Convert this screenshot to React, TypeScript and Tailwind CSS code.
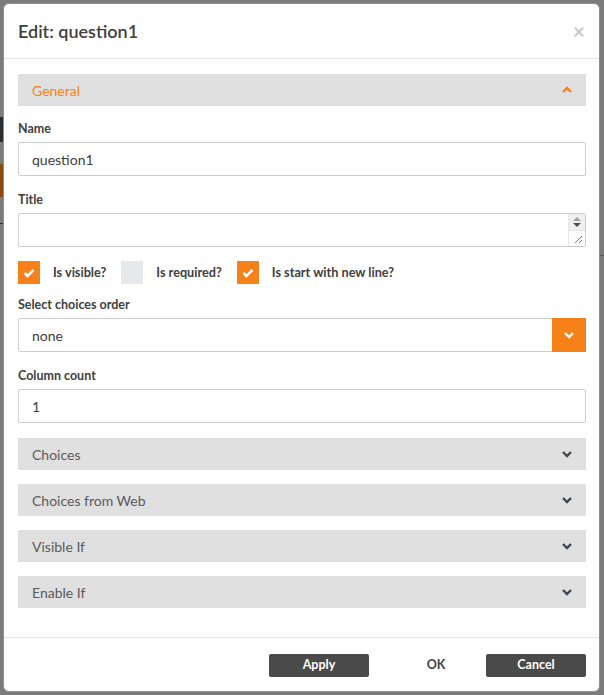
import React from 'react';

const ORANGE = '#f78119';

const ChevronIcon = ({ up = false, color }: { up?: boolean; color: string }) => (
  <svg width="10" height="8" viewBox="0 0 10 8" className={up ? 'rotate-180' : ''}>
    <path d="M1 2 L5 6 L9 2" fill="none" stroke={color} strokeWidth="2.4" strokeLinecap="butt" />
  </svg>
);

const CheckMark = () => (
  <svg width="12" height="10" viewBox="0 0 12 10">
    <path d="M1.5 5 L4.5 8 L10.5 2" fill="none" stroke="#fff" strokeWidth="2.6" />
  </svg>
);

const Section = ({ title, open = false }: { title: string; open?: boolean }) => (
  <div className="h-8 bg-[#e0e0e0] flex items-center justify-between pl-[14px] pr-[14px]">
    <span className={`text-[14px] ${open ? 'text-[#f78119]' : 'text-[#5a5a5a]'}`}>{title}</span>
    <ChevronIcon up={open} color={open ? ORANGE : '#3d4550'} />
  </div>
);

const Label = ({ children, className = '' }: { children: React.ReactNode; className?: string }) => (
  <div className={`text-[12.5px] font-bold leading-4 text-[#404040] mb-[5px] ${className}`}>{children}</div>
);

const TextBox = ({ value }: { value: string }) => (
  <div className="h-[34px] border border-[#cccccc] rounded-[2px] flex items-center pl-[13px] text-[14px] text-[#404040]">
    {value}
  </div>
);

const Check = ({ checked, label }: { checked: boolean; label: string }) => (
  <div className="flex items-center">
    <div
      className={`w-[22px] h-[23px] flex items-center justify-center ${checked ? 'bg-[#f78119]' : 'bg-[#e6e9ec]'}`}
    >
      {checked && <CheckMark />}
    </div>
    <span className="ml-[13px] mr-[15px] text-[12.7px] font-bold text-[#404040]">{label}</span>
  </div>
);

export default function App() {
  return (
    <div className="relative w-[604px] h-[695px] bg-[#7b7b7b] pt-[3px] pl-[3px] font-['Lato',sans-serif] overflow-hidden">
      {/* bits of the page showing around the overlay */}
      <div className="absolute left-0 top-[117px] w-[3px] h-[25px] bg-[#2a2f33]" />
      <div className="absolute left-0 top-[164px] w-[3px] h-[33px] bg-[#8a4a12]" />
      <div className="absolute left-0 top-[223px] w-[3px] h-px bg-[#333]" />
      <div className="absolute right-0 top-[255px] w-[4px] h-px bg-[#8a4a12]" />

      <div className="relative w-[597px] h-[689px] bg-white rounded-[6px] border border-[#8f8f8f] flex flex-col">
        <div className="h-[55px] shrink-0 border-b border-[#e5e5e5] flex items-center justify-between pl-[14px] pr-[14px]">
          <h4 className="text-[18px] font-semibold text-[#404040]">Edit: question1</h4>
          <span className="text-[21px] font-bold leading-none text-[#c8c8c8] -mt-[2px]">×</span>
        </div>

        <div className="flex-1 pt-[15px] pl-[14px] pr-[13px]">
          <Section title="General" open />

          <Label className="mt-[15px]">Name</Label>
          <TextBox value="question1" />

          <Label className="mt-[16px]">Title</Label>
          <div className="h-[34px] border border-[#cccccc] rounded-[2px] flex">
            <div className="flex-1" />
            <div className="w-[17px] flex flex-col border-l border-[#e6e6e6]">
              <div className="h-[16px] bg-[#f0f0f0] flex flex-col items-center justify-center gap-[2px]">
                <div className="w-0 h-0 border-l-[4px] border-r-[4px] border-b-[4px] border-l-transparent border-r-transparent border-b-[#a3a3a3]" />
                <div className="w-0 h-0 border-l-[4px] border-r-[4px] border-t-[4px] border-l-transparent border-r-transparent border-t-[#505050]" />
              </div>
              <div className="flex-1 border-t border-[#e6e6e6] relative">
                <svg width="10" height="10" viewBox="0 0 10 10" className="absolute right-[2px] bottom-[2px]">
                  <path d="M9 2 L2 9 M9 6 L6 9" stroke="#7a7a7a" strokeWidth="1" />
                </svg>
              </div>
            </div>
          </div>

          <div className="mt-[14px] flex items-center">
            <Check checked label="Is visible?" />
            <Check checked={false} label="Is required?" />
            <Check checked label="Is start with new line?" />
          </div>

          <Label className="mt-[13px]">Select choices order</Label>
          <div className="h-[34px] border border-[#cccccc] rounded-[2px] flex items-center text-[14px] text-[#404040]">
            <span className="flex-1 pl-[13px]">none</span>
            <div className="w-[34px] -my-px -mr-px h-[34px] bg-[#f78119] flex items-center justify-center">
              <ChevronIcon color="#fff" />
            </div>
          </div>

          <Label className="mt-[16px]">Column count</Label>
          <TextBox value="1" />

          <div className="mt-[15px] flex flex-col gap-[14px]">
            <Section title="Choices" />
            <Section title="Choices from Web" />
            <Section title="Visible If" />
            <Section title="Enable If" />
          </div>
        </div>

        <div className="h-[54px] shrink-0 border-t border-[#e5e5e5] flex items-center justify-end pr-[13px] pt-[2px]">
          <button className="w-[100px] h-[23px] bg-[#4a4a4a] text-white text-[12.5px] font-bold rounded-[2px]">Apply</button>
          <button className="w-[100px] h-[23px] ml-[17px] text-[#404040] text-[12.5px] font-bold">OK</button>
          <button className="w-[100px] h-[23px] bg-[#4a4a4a] text-white text-[12.5px] font-bold rounded-[2px]">Cancel</button>
        </div>
      </div>
    </div>
  );
}
